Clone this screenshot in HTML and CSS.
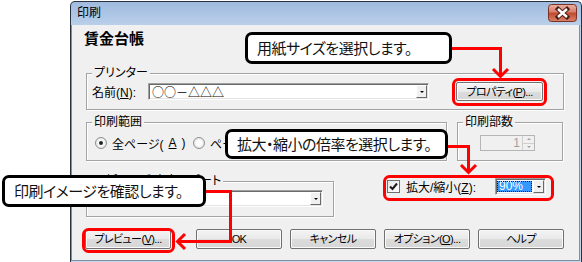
FILE: index.html
```html
<!DOCTYPE html>
<html>
<head>
    <meta charset="utf-8">
    <title>印刷</title>
    <link rel="stylesheet" href="styles.css">
</head>
<body>
    <div class="window">
        <div class="titlebar">
            <span class="title">印刷</span>
            <span class="close">
                <svg width="29" height="18" viewBox="0 0 29 18">
                    <defs>
                        <linearGradient id="cg" x1="0" y1="0" x2="0" y2="1">
                            <stop offset="0" stop-color="#eab2a4"/>
                            <stop offset=".45" stop-color="#d57d69"/>
                            <stop offset=".5" stop-color="#c1472f"/>
                            <stop offset="1" stop-color="#d8846a"/>
                        </linearGradient>
                    </defs>
                    <rect x=".5" y=".5" width="28" height="17" rx="3" fill="url(#cg)" stroke="#7a3126"/>
                    <path d="M10 5 L19 13 M19 5 L10 13" stroke="#4b1b14" stroke-width="4.4" stroke-linecap="square"/>
                    <path d="M10 5 L19 13 M19 5 L10 13" stroke="#fff" stroke-width="2.4"/>
                </svg>
            </span>
        </div>
        <div class="client">
            <div class="heading">賃金台帳</div>

            <div class="group printer">
                <span class="legend">プリンター</span>
                <div class="row">
                    <span class="name-label">名前(<u>N</u>):</span>
                    <div class="combo printer-combo">
                        <span class="combo-text cjk">○○－△△△</span>
                        <span class="drop"></span>
                    </div>
                    <button class="btn props">プロパティ(<u>P</u>)...</button>
                </div>
            </div>

            <div class="pair">
                <div class="group range">
                    <span class="legend">印刷範囲</span>
                    <div class="radios">
                        <span class="opt first"><i class="radio on"></i>全ページ(<u>A</u>)</span>
                        <span class="opt"><i class="radio"></i>ページ指定(<u>G</u>)</span>
                    </div>
                </div>
                <div class="group copies">
                    <span class="legend">印刷部数</span>
                    <div class="spin">
                        <span class="spin-val">1</span>
                        <span class="spin-btns"><i class="up"></i><i class="down"></i></span>
                    </div>
                </div>
            </div>

            <div class="pair">
                <div class="group layout">
                    <span class="legend">用紙サイズ/出力レポート</span>
                    <div class="combo layout-combo">
                        <span class="combo-text"></span>
                        <span class="drop"></span>
                    </div>
                </div>
                <div class="zoom">
                    <span class="check">
                        <svg width="11" height="11" viewBox="0 0 11 11">
                            <path d="M2 5.5 L4.5 8 L9 2.5" fill="none" stroke="#1a1a1a" stroke-width="2"/>
                        </svg>
                    </span>
                    <span class="zoom-label">拡大/縮小(<u>Z</u>):</span>
                    <div class="combo zoom-combo">
                        <span class="sel">90%</span>
                        <span class="drop"></span>
                    </div>
                </div>
            </div>

            <div class="buttons">
                <button class="btn preview">プレビュー(<u>V</u>)...</button>
                <button class="btn">OK</button>
                <button class="btn">キャンセル</button>
                <button class="btn">オプション(<u>O</u>)...</button>
                <button class="btn">ヘルプ</button>
            </div>
        </div>
    </div>

    <svg class="marks" width="582" height="262" viewBox="0 0 582 262">
        <g fill="none" stroke="#ff0000" stroke-width="3">
            <rect x="453.5" y="79.5" width="92" height="25" rx="5"/>
            <rect x="384.5" y="176.5" width="168" height="23" rx="5"/>
            <rect x="83.5" y="229.5" width="90" height="22" rx="5"/>
            <polyline points="452,48.5 500.5,48.5 500.5,76"/>
            <polyline points="493,69 500.5,76.5 508,69"/>
            <polyline points="447,146.5 468.5,146.5 468.5,172"/>
            <polyline points="461,165 468.5,172.5 476,165"/>
            <polyline points="205,191.5 230.5,191.5 230.5,241.5 178,241.5"/>
            <polyline points="185,234 177.5,241.5 185,249"/>
        </g>
    </svg>

    <div class="callout c1">用紙サイズを選択します。</div>
    <div class="callout c2">拡大・縮小の倍率を選択します。</div>
    <div class="callout c3">印刷イメージを確認します。</div>
</body>
</html>
```

FILE: styles.css
```css
html,body{
    margin: 0;
    padding: 0;
}
body{
    width: 582px;
    height: 262px;
    position: relative;
    overflow: hidden;
    background: #fff;
    font-family: "Liberation Sans", "Noto Sans CJK JP", sans-serif;
    font-size: 12px;
    font-feature-settings: "palt";
    color: #000;
}
.cjk{
    font-family: "Noto Sans CJK JP", sans-serif;
}
u{
    text-decoration: underline;
    text-underline-offset: 1px;
}

/* window frame */
.window{
    box-sizing: border-box;
    width: 512px;
    height: 261px;
    margin: 1px 0 0 70px;
    border: 1px solid #28323f;
    border-bottom: none;
    border-radius: 5px 5px 0 0;
    background: linear-gradient(#a0bbdf, #b9cfea 23px, #c3d6ec);
    display: flex;
    flex-direction: column;
}
.titlebar{
    height: 23px;
    display: flex;
    justify-content: space-between;
    align-items: flex-start;
    padding: 0 4px 0 6px;
}
.title{
    line-height: 23px;
    font-size: 12px;
}
.close{
    margin-top: 2px;
    height: 18px;
}
.client{
    flex: 1;
    margin: 0 1px 1px 0;
    border: 1px solid #7f90a6;
    border-top: none;
    background: #f0f0f0;
    padding: 5px 15px 0 14px;
}
.heading{
    font-size: 15px;
    font-weight: bold;
    line-height: 18px;
    margin-left: -2px;
    font-feature-settings: normal;
}

/* group boxes */
.group{
    box-sizing: border-box;
    border: 1px solid #a3a3a3;
    box-shadow: inset 1px 1px 0 #fff, 1px 1px 0 #fff;
}
.legend{
    display: block;
    width: fit-content;
    height: 14px;
    line-height: 14px;
    margin: -8px 0 0 5px;
    padding: 0 2px;
    background: #f0f0f0;
    white-space: nowrap;
}
.printer{
    margin-top: 25px;
    padding-bottom: 8px;
}
.row{
    display: flex;
    align-items: center;
    height: 19px;
    margin-top: 2px;
    padding-left: 5px;
}
.name-label{
    width: 56px;
}
.pair{
    display: flex;
    gap: 10px;
}
.range{
    width: 361px;
    margin-top: 12px;
    padding-bottom: 10px;
}
.copies{
    width: 106px;
    margin-top: 12px;
}
.layout{
    width: 248px;
    margin-top: 20px;
    padding-bottom: 9px;
}

/* combo boxes */
.combo{
    box-sizing: border-box;
    height: 17px;
    display: flex;
    background: #fff;
    border: 1px solid;
    border-color: #a0a0a0 #fff #fff #a0a0a0;
    box-shadow: inset 1px 1px 0 #696969, inset -1px -1px 0 #e3e3e3;
    padding: 1px;
}
.combo-text{
    flex: 1;
    line-height: 13px;
    padding-left: 2px;
    white-space: nowrap;
    font-feature-settings: normal;
}
.drop{
    box-sizing: border-box;
    width: 11px;
    border: 1px solid;
    border-color: #fff #696969 #696969 #fff;
    background: #f0f0f0;
    display: flex;
    align-items: center;
    justify-content: center;
}
.drop::after{
    content: "";
    border-left: 2px solid transparent;
    border-right: 2px solid transparent;
    border-top: 2px solid #000;
}
.printer-combo{
    width: 281px;
}
.layout-combo{
    width: 226px;
    margin: 2px 0 0 10px;
}

/* radios */
.radios{
    display: flex;
    align-items: center;
    height: 14px;
    margin-top: 7px;
    padding-left: 8px;
}
.opt{
    display: flex;
    align-items: center;
    gap: 5px;
    white-space: nowrap;
}
.opt.first{
    width: 98px;
}
.radio{
    box-sizing: border-box;
    width: 12px;
    height: 12px;
    border-radius: 50%;
    border: 1px solid #8e8f8f;
    background: radial-gradient(#fdfdfd 30%, #d8d8d8);
    display: flex;
    align-items: center;
    justify-content: center;
}
.radio.on::after{
    content: "";
    width: 4px;
    height: 4px;
    border-radius: 50%;
    background: #1d2a20;
}

/* spinner */
.spin{
    box-sizing: border-box;
    width: 55px;
    height: 16px;
    margin: 6px 0 0 22px;
    border: 1px solid #b5b5b5;
    background: #f0f0f0;
    display: flex;
}
.spin-val{
    flex: 1;
    text-align: right;
    line-height: 14px;
    padding-right: 2px;
    color: #a0a0a0;
}
.spin-btns{
    width: 11px;
    display: flex;
    flex-direction: column;
    border-left: 1px solid #d0d0d0;
}
.spin-btns i{
    flex: 1;
    display: flex;
    align-items: center;
    justify-content: center;
}
.spin-btns .up{
    border-bottom: 1px solid #d0d0d0;
}
.spin-btns .up::after{
    content: "";
    border-left: 2px solid transparent;
    border-right: 2px solid transparent;
    border-bottom: 2px solid #a0a0a0;
}
.spin-btns .down::after{
    content: "";
    border-left: 2px solid transparent;
    border-right: 2px solid transparent;
    border-top: 2px solid #a0a0a0;
}

/* zoom setting */
.zoom{
    display: flex;
    align-items: center;
    height: 17px;
    margin: 17px 0 0 43px;
}
.check{
    box-sizing: border-box;
    width: 13px;
    height: 13px;
    border: 1px solid #6f6f6f;
    background: linear-gradient(135deg, #e6e6e6, #fff);
    display: flex;
    align-items: center;
    justify-content: center;
}
.zoom-label{
    width: 89px;
    margin-left: 6px;
    white-space: nowrap;
}
.zoom-combo{
    width: 51px;
}
.sel{
    flex: 1;
    margin: 1px 1px 1px 0;
    padding-left: 2px;
    line-height: 11px;
    background: #3399ff;
    color: #fff;
    outline: 1px dotted #1b1b1b;
    outline-offset: -1px;
}

/* push buttons */
.btn{
    box-sizing: border-box;
    height: 20px;
    width: 86px;
    padding: 0;
    font-family: inherit;
    font-size: 11px;
    letter-spacing: -0.6px;
    font-feature-settings: "palt";
    line-height: 16px;
    white-space: nowrap;
    color: #000;
    border: 1px solid #707070;
    border-radius: 2px;
    background: linear-gradient(#f4f4f4, #e9e9e9 50%, #dcdcdc 51%, #d6d6d6);
    box-shadow: inset 0 0 0 1px #fafafa;
}
.props{
    width: 87px;
    height: 19px;
    margin-left: 27px;
}
.buttons{
    display: flex;
    gap: 8px;
    margin: 12px 0 0 -1px;
}
.preview{
    margin-right: 17px;
}

/* annotations */
.marks{
    position: absolute;
    left: 0;
    top: 0;
}
.callout{
    position: absolute;
    box-sizing: border-box;
    display: flex;
    align-items: center;
    padding-left: 9px;
    background: #fff;
    border: 3px solid #000;
    border-radius: 7px;
    font-family: "Noto Sans CJK JP", sans-serif;
    font-size: 15px;
    letter-spacing: -0.5px;
    line-height: 20px;
    white-space: nowrap;
    color: #111;
}
.c1{
    left: 245px;
    top: 32px;
    width: 207px;
    height: 32px;
}
.c2{
    left: 225px;
    top: 129px;
    width: 223px;
    height: 30px;
}
.c3{
    left: 2px;
    top: 175px;
    width: 204px;
    height: 32px;
}
```
